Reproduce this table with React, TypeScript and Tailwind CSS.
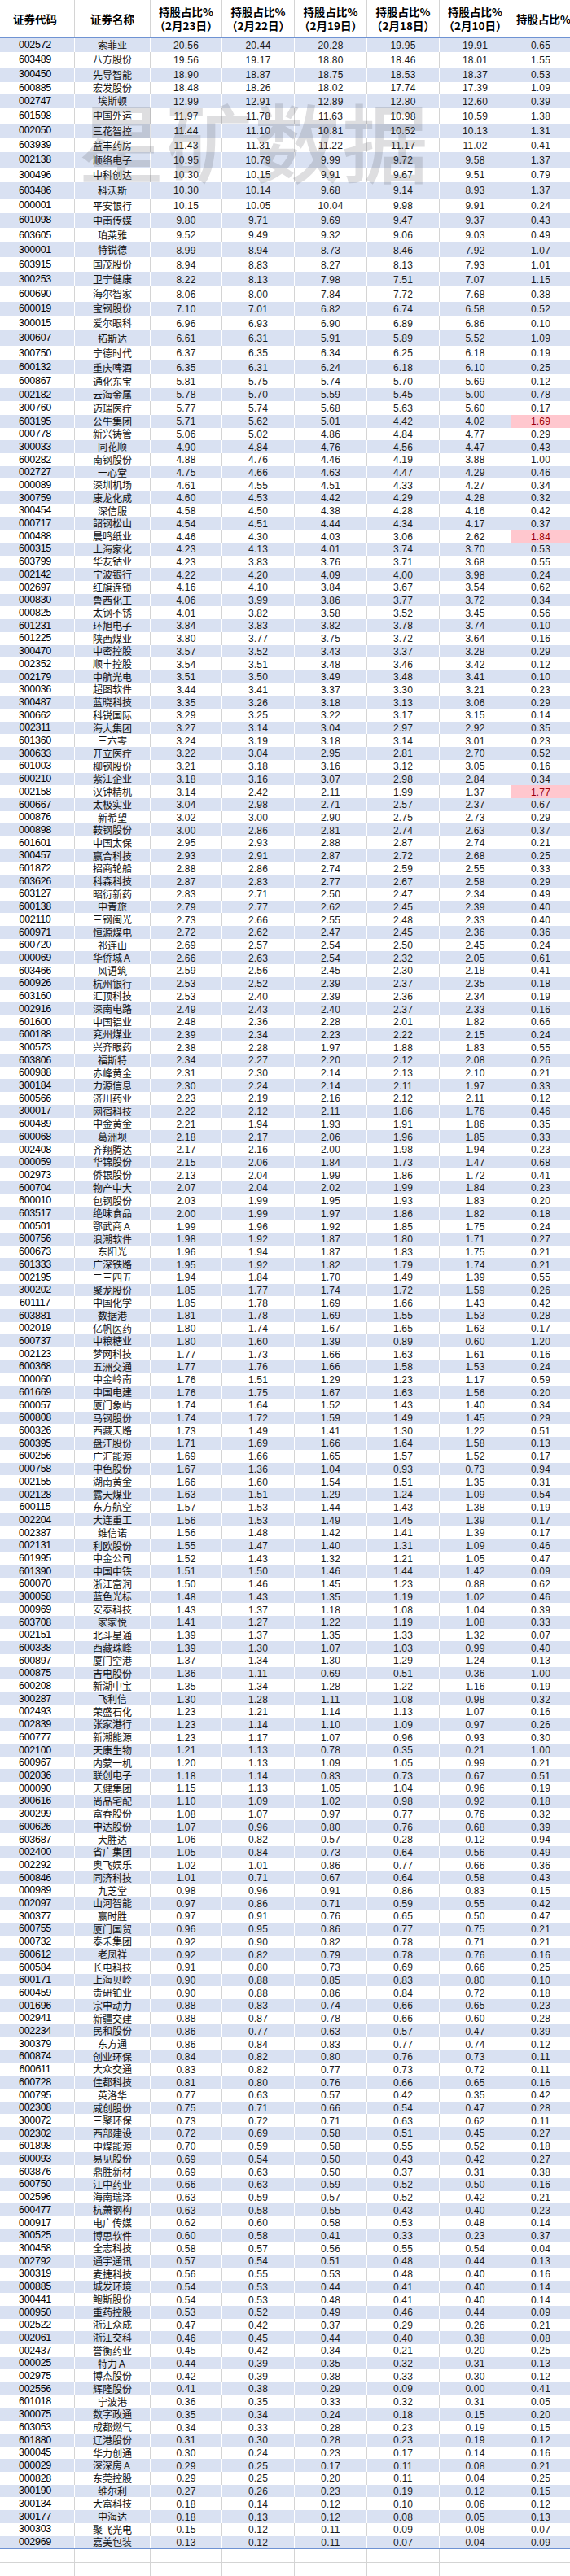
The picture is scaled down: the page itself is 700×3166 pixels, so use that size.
const RAW = `002572 索菲亚 20.56 20.44 20.28 19.95 19.91 0.65
603489 八方股份 19.56 19.17 18.80 18.46 18.01 1.55
300450 先导智能 18.90 18.87 18.75 18.53 18.37 0.53
600885 宏发股份 18.48 18.26 18.02 17.74 17.39 1.09
002747 埃斯顿 12.99 12.91 12.89 12.80 12.60 0.39
601598 中国外运 11.97 11.78 11.63 10.98 10.59 1.38
002050 三花智控 11.44 11.10 10.81 10.52 10.13 1.31
603939 益丰药房 11.43 11.31 11.22 11.17 11.02 0.41
002138 顺络电子 10.95 10.79 9.99 9.72 9.58 1.37
300496 中科创达 10.30 10.15 9.91 9.67 9.51 0.79
603486 科沃斯 10.30 10.14 9.68 9.14 8.93 1.37
000001 平安银行 10.15 10.05 10.04 9.98 9.91 0.24
601098 中南传媒 9.80 9.71 9.69 9.47 9.37 0.43
603605 珀莱雅 9.52 9.49 9.32 9.06 9.03 0.49
300001 特锐德 8.99 8.94 8.73 8.46 7.92 1.07
603915 国茂股份 8.94 8.83 8.27 8.13 7.93 1.01
300253 卫宁健康 8.22 8.13 7.98 7.51 7.07 1.15
600690 海尔智家 8.06 8.00 7.84 7.72 7.68 0.38
600019 宝钢股份 7.10 7.01 6.82 6.74 6.58 0.52
300015 爱尔眼科 6.96 6.93 6.90 6.89 6.86 0.10
300607 拓斯达 6.61 6.31 5.91 5.89 5.52 1.09
300750 宁德时代 6.37 6.35 6.34 6.25 6.18 0.19
600132 重庆啤酒 6.35 6.31 6.24 6.18 6.10 0.25
600867 通化东宝 5.81 5.75 5.74 5.70 5.69 0.12
002182 云海金属 5.78 5.70 5.59 5.45 5.00 0.78
300760 迈瑞医疗 5.77 5.74 5.68 5.63 5.60 0.17
603195 公牛集团 5.71 5.62 5.01 4.42 4.02 1.69*
000778 新兴铸管 5.06 5.02 4.86 4.84 4.77 0.29
300033 同花顺 4.90 4.84 4.76 4.56 4.47 0.43
600282 南钢股份 4.88 4.76 4.46 4.19 3.88 1.00
002727 一心堂 4.75 4.66 4.63 4.47 4.29 0.46
000089 深圳机场 4.61 4.55 4.51 4.33 4.27 0.34
300759 康龙化成 4.60 4.53 4.42 4.29 4.28 0.32
300454 深信服 4.58 4.50 4.38 4.28 4.16 0.42
000717 韶钢松山 4.54 4.51 4.44 4.34 4.17 0.37
000488 晨鸣纸业 4.46 4.30 4.03 3.06 2.62 1.84*
600315 上海家化 4.23 4.13 4.01 3.74 3.70 0.53
603799 华友钴业 4.23 3.83 3.76 3.71 3.68 0.55
002142 宁波银行 4.22 4.20 4.09 4.00 3.98 0.24
002697 红旗连锁 4.16 4.10 3.84 3.67 3.54 0.62
000830 鲁西化工 4.06 3.99 3.86 3.77 3.72 0.34
000825 太钢不锈 4.01 3.82 3.58 3.52 3.45 0.56
601231 环旭电子 3.84 3.83 3.82 3.78 3.74 0.10
601225 陕西煤业 3.80 3.77 3.75 3.72 3.64 0.16
300470 中密控股 3.57 3.52 3.43 3.37 3.28 0.29
002352 顺丰控股 3.54 3.51 3.48 3.46 3.42 0.12
002179 中航光电 3.51 3.50 3.49 3.48 3.41 0.10
300036 超图软件 3.44 3.41 3.37 3.30 3.21 0.23
300487 蓝晓科技 3.35 3.26 3.18 3.13 3.06 0.29
300662 科锐国际 3.29 3.25 3.22 3.17 3.15 0.14
002311 海大集团 3.27 3.14 3.04 2.97 2.92 0.35
601360 三六零 3.24 3.19 3.18 3.14 3.01 0.23
300633 开立医疗 3.22 3.04 2.95 2.81 2.70 0.52
601003 柳钢股份 3.21 3.18 3.16 3.12 3.05 0.16
600210 紫江企业 3.18 3.16 3.07 2.98 2.84 0.34
002158 汉钟精机 3.14 2.42 2.11 1.99 1.37 1.77*
600667 太极实业 3.04 2.98 2.71 2.57 2.37 0.67
000876 新希望 3.02 3.00 2.90 2.75 2.73 0.29
000898 鞍钢股份 3.00 2.86 2.81 2.74 2.63 0.37
601601 中国太保 2.95 2.93 2.88 2.87 2.74 0.21
300457 赢合科技 2.93 2.91 2.87 2.72 2.68 0.25
601872 招商轮船 2.88 2.86 2.74 2.59 2.55 0.33
603626 科森科技 2.87 2.83 2.77 2.67 2.58 0.29
603127 昭衍新药 2.83 2.71 2.50 2.47 2.34 0.49
600138 中青旅 2.79 2.77 2.62 2.45 2.39 0.40
002110 三钢闽光 2.73 2.66 2.55 2.48 2.33 0.40
600971 恒源煤电 2.72 2.62 2.47 2.45 2.36 0.36
600720 祁连山 2.69 2.57 2.54 2.50 2.45 0.24
000069 华侨城Ａ 2.66 2.63 2.54 2.32 2.05 0.61
603466 风语筑 2.59 2.56 2.45 2.30 2.18 0.41
600926 杭州银行 2.53 2.52 2.39 2.37 2.35 0.18
603160 汇顶科技 2.53 2.40 2.39 2.36 2.34 0.19
002916 深南电路 2.49 2.43 2.40 2.37 2.33 0.16
601600 中国铝业 2.48 2.36 2.28 2.01 1.82 0.66
600188 兖州煤业 2.39 2.34 2.23 2.22 2.15 0.24
300573 兴齐眼药 2.38 2.28 1.97 1.88 1.83 0.55
603806 福斯特 2.34 2.27 2.20 2.12 2.08 0.26
600988 赤峰黄金 2.31 2.30 2.14 2.13 2.10 0.21
300184 力源信息 2.30 2.24 2.14 2.11 1.97 0.33
600566 济川药业 2.23 2.19 2.16 2.12 2.11 0.12
300017 网宿科技 2.22 2.12 2.11 1.86 1.76 0.46
600489 中金黄金 2.21 1.94 1.93 1.91 1.86 0.35
600068 葛洲坝 2.18 2.17 2.06 1.96 1.85 0.33
002408 齐翔腾达 2.17 2.16 2.00 1.98 1.94 0.23
000059 华锦股份 2.15 2.06 1.84 1.73 1.47 0.68
002973 侨银股份 2.13 2.04 1.99 1.86 1.72 0.41
600704 物产中大 2.07 2.04 2.02 1.99 1.84 0.23
600010 包钢股份 2.03 1.99 1.95 1.93 1.83 0.20
603517 绝味食品 2.00 1.99 1.97 1.86 1.82 0.18
000501 鄂武商Ａ 1.99 1.96 1.92 1.85 1.75 0.24
600756 浪潮软件 1.98 1.92 1.87 1.80 1.71 0.27
600673 东阳光 1.96 1.94 1.87 1.83 1.75 0.21
601333 广深铁路 1.95 1.92 1.82 1.79 1.74 0.21
002195 二三四五 1.94 1.84 1.70 1.49 1.39 0.55
300202 聚龙股份 1.85 1.77 1.74 1.72 1.59 0.26
601117 中国化学 1.85 1.78 1.69 1.66 1.43 0.42
603881 数据港 1.81 1.78 1.69 1.55 1.53 0.28
002019 亿帆医药 1.80 1.74 1.67 1.65 1.63 0.17
600737 中粮糖业 1.80 1.60 1.39 0.89 0.60 1.20
002123 梦网科技 1.77 1.73 1.66 1.63 1.61 0.16
600368 五洲交通 1.77 1.76 1.66 1.58 1.53 0.24
000060 中金岭南 1.76 1.51 1.29 1.23 1.17 0.59
601669 中国电建 1.76 1.75 1.67 1.63 1.56 0.20
600057 厦门象屿 1.74 1.64 1.52 1.43 1.40 0.34
600808 马钢股份 1.74 1.72 1.59 1.49 1.45 0.29
600326 西藏天路 1.73 1.49 1.41 1.30 1.22 0.51
600395 盘江股份 1.71 1.69 1.66 1.64 1.58 0.13
600256 广汇能源 1.69 1.66 1.65 1.57 1.52 0.17
000758 中色股份 1.67 1.36 1.04 0.93 0.73 0.94
002155 湖南黄金 1.66 1.60 1.54 1.51 1.35 0.31
002128 露天煤业 1.63 1.51 1.29 1.24 1.09 0.54
600115 东方航空 1.57 1.53 1.44 1.43 1.38 0.19
002204 大连重工 1.56 1.53 1.49 1.45 1.39 0.17
002387 维信诺 1.56 1.48 1.42 1.41 1.39 0.17
002131 利欧股份 1.55 1.47 1.40 1.31 1.09 0.46
601995 中金公司 1.52 1.43 1.32 1.21 1.05 0.47
601390 中国中铁 1.51 1.50 1.46 1.44 1.42 0.09
600070 浙江富润 1.50 1.46 1.45 1.23 0.88 0.62
300058 蓝色光标 1.48 1.43 1.35 1.19 1.02 0.46
000969 安泰科技 1.43 1.37 1.18 1.08 1.04 0.39
603708 家家悦 1.41 1.27 1.22 1.19 1.08 0.33
002151 北斗星通 1.39 1.37 1.35 1.33 1.32 0.07
600338 西藏珠峰 1.39 1.30 1.07 1.03 0.99 0.40
600897 厦门空港 1.37 1.34 1.30 1.29 1.24 0.13
000875 吉电股份 1.36 1.11 0.69 0.51 0.36 1.00
600208 新湖中宝 1.35 1.34 1.28 1.22 1.16 0.19
300287 飞利信 1.30 1.28 1.11 1.08 0.98 0.32
002493 荣盛石化 1.23 1.21 1.14 1.13 1.07 0.16
002839 张家港行 1.23 1.14 1.10 1.09 0.97 0.26
600777 新潮能源 1.23 1.17 1.07 0.96 0.93 0.30
002100 天康生物 1.21 1.13 0.78 0.35 0.21 1.00
600967 内蒙一机 1.20 1.13 1.09 1.05 0.99 0.21
002036 联创电子 1.18 1.14 0.83 0.73 0.67 0.51
000090 天健集团 1.15 1.13 1.05 1.04 0.96 0.19
300616 尚品宅配 1.10 1.09 1.02 0.98 0.92 0.18
300299 富春股份 1.08 1.07 0.97 0.77 0.76 0.32
600626 申达股份 1.07 0.96 0.80 0.76 0.68 0.39
603687 大胜达 1.06 0.82 0.57 0.28 0.12 0.94
002400 省广集团 1.05 0.84 0.73 0.64 0.56 0.49
002292 奥飞娱乐 1.02 1.01 0.86 0.77 0.66 0.36
600846 同济科技 1.01 0.71 0.67 0.64 0.58 0.43
000989 九芝堂 0.98 0.96 0.91 0.86 0.83 0.15
002097 山河智能 0.97 0.86 0.71 0.59 0.55 0.42
300377 赢时胜 0.97 0.91 0.76 0.65 0.50 0.47
600755 厦门国贸 0.96 0.95 0.86 0.77 0.75 0.21
000732 泰禾集团 0.92 0.90 0.82 0.78 0.71 0.21
600612 老凤祥 0.92 0.82 0.79 0.78 0.76 0.16
600584 长电科技 0.91 0.80 0.73 0.69 0.66 0.25
600171 上海贝岭 0.90 0.88 0.85 0.83 0.80 0.10
600459 贵研铂业 0.90 0.88 0.86 0.84 0.72 0.18
001696 宗申动力 0.88 0.83 0.74 0.66 0.65 0.23
002941 新疆交建 0.88 0.87 0.78 0.66 0.60 0.28
002234 民和股份 0.86 0.77 0.63 0.57 0.47 0.39
300379 东方通 0.86 0.84 0.83 0.77 0.74 0.12
600874 创业环保 0.84 0.82 0.80 0.76 0.73 0.11
600611 大众交通 0.83 0.82 0.77 0.73 0.72 0.11
600728 佳都科技 0.81 0.80 0.76 0.66 0.65 0.16
000795 英洛华 0.77 0.63 0.57 0.42 0.35 0.42
002308 威创股份 0.75 0.71 0.66 0.54 0.47 0.28
300072 三聚环保 0.73 0.72 0.71 0.63 0.62 0.11
002302 西部建设 0.72 0.69 0.58 0.51 0.45 0.27
601898 中煤能源 0.70 0.59 0.58 0.55 0.52 0.18
600093 易见股份 0.69 0.54 0.50 0.43 0.42 0.27
603876 鼎胜新材 0.69 0.63 0.50 0.37 0.31 0.38
600750 江中药业 0.66 0.63 0.59 0.52 0.50 0.16
002596 海南瑞泽 0.63 0.59 0.57 0.52 0.42 0.21
600477 杭萧钢构 0.63 0.58 0.55 0.43 0.40 0.23
000917 电广传媒 0.62 0.60 0.58 0.53 0.48 0.14
300525 博思软件 0.60 0.58 0.41 0.33 0.23 0.37
300458 全志科技 0.58 0.57 0.56 0.55 0.54 0.04
002792 通宇通讯 0.57 0.54 0.51 0.48 0.44 0.13
300319 麦捷科技 0.56 0.55 0.53 0.48 0.40 0.16
000885 城发环境 0.54 0.53 0.44 0.41 0.40 0.14
300441 鲍斯股份 0.54 0.53 0.48 0.41 0.40 0.14
000950 重药控股 0.53 0.52 0.49 0.46 0.44 0.09
002522 浙江众成 0.47 0.42 0.37 0.29 0.26 0.21
002061 浙江交科 0.46 0.45 0.44 0.40 0.38 0.08
002437 誉衡药业 0.45 0.42 0.34 0.21 0.20 0.25
000025 特力Ａ 0.44 0.39 0.35 0.32 0.31 0.13
002975 博杰股份 0.42 0.39 0.38 0.33 0.30 0.12
002556 辉隆股份 0.41 0.38 0.29 0.09 0.00 0.41
601018 宁波港 0.36 0.35 0.33 0.32 0.31 0.05
300075 数字政通 0.35 0.34 0.24 0.18 0.15 0.20
603053 成都燃气 0.34 0.33 0.28 0.23 0.19 0.15
601880 辽港股份 0.31 0.30 0.28 0.23 0.19 0.12
300045 华力创通 0.30 0.24 0.23 0.17 0.14 0.16
000029 深深房Ａ 0.29 0.25 0.17 0.11 0.08 0.21
000828 东莞控股 0.29 0.25 0.20 0.11 0.04 0.25
300190 维尔利 0.27 0.26 0.23 0.19 0.12 0.15
300134 大富科技 0.18 0.14 0.12 0.10 0.06 0.12
300177 中海达 0.18 0.13 0.12 0.08 0.05 0.13
300303 聚飞光电 0.15 0.12 0.11 0.09 0.08 0.07
002969 嘉美包装 0.13 0.12 0.11 0.07 0.04 0.09`

// the screenshot's first rows are taller than the rest
const TOP_HEIGHTS = [
  17.3, 18.7, 18, 14.3, 18.3, 18.3, 18.3, 17.3, 18.7, 18, 20, 17.7, 18.3, 18.3,
  18.3, 17.7, 18, 18.7, 17.3, 18.3, 18.3, 18.3, 17.3, 16.7, 16, 17.3, 15.3,
]

const rows = RAW.split("\n").map((line) => {
  const [code, name, ...vals] = line.trim().split(/\s+/)
  const last = vals[5]
  const hot = last.endsWith("*")
  return { code, name, vals: [...vals.slice(0, 5), last.replace("*", "")], hot }
})

const dates = ["2月23日", "2月22日", "2月19日", "2月18日", "2月10日"]

const GRID = "grid grid-cols-[92px_93px_88px_89px_89px_89px_88px_72px]"
const NUM = "font-['Liberation_Sans',sans-serif] text-[12px] tracking-[0.2px] text-[#1a1a1a]"
const CJK = "font-['Noto_Sans_CJK_SC',sans-serif]"

function DataRow({ r, i }: { r: (typeof rows)[number]; i: number }) {
  const blue = i % 2 === 0
  const line = blue ? "border-r border-white" : "border-r border-[#d4d4d4]"
  const h = i < TOP_HEIGHTS.length ? TOP_HEIGHTS[i] : 15.706
  return (
    <div className={`${GRID} ${blue ? "bg-[#d9e1f2]" : "bg-white"}`} style={{ height: h }}>
      <div className={`${line} flex items-center justify-center pr-[5px] font-['Liberation_Sans',sans-serif] text-[12.5px] tracking-[-0.3px] leading-none text-black`}>
        {r.code}
      </div>
      <div className={`${line} ${CJK} flex items-center justify-center text-[12px] leading-none text-[#111]`}>
        {r.name}
      </div>
      {r.vals.map((v, k) => {
        const isLast = k === 5
        const pink = isLast && r.hot
        return (
          <div
            key={k}
            className={`${isLast ? "" : line} ${NUM} flex items-center justify-center pt-[1px] leading-none ${
              pink ? "bg-[#ffc7ce] text-[#9c0006]" : ""
            }`}
          >
            {v}
          </div>
        )
      })}
    </div>
  )
}

export default function App() {
  return (
    <div className="relative w-[700px] overflow-hidden bg-white">
      {/* Header */}
      <div className={`${GRID} h-[46.7px] border-b-[1.5px] border-[#6f93d3] ${CJK} font-bold text-black text-[13.5px]`}>
        <div className="flex items-center justify-center pr-[5px] border-r border-[#d4d4d4]">证券代码</div>
        <div className="flex items-center justify-center border-r border-[#d4d4d4]">证券名称</div>
        {dates.map((d) => (
          <div key={d} className="flex flex-col items-center justify-center leading-[17px] border-r border-[#d4d4d4]">
            <span>持股占比%</span>
            <span>（{d}）</span>
          </div>
        ))}
        <div className="flex items-center pl-[6px] whitespace-nowrap overflow-hidden">持股占比%</div>
      </div>

      {/* Body */}
      <div>
        {rows.map((r, i) => (
          <DataRow key={r.code} r={r} i={i} />
        ))}
      </div>

      {/* empty sheet rows below the table */}
      <div className="border-t-[1.5px] border-[#6f93d3]">
        {[17, 17].map((h, i) => (
          <div key={i} className={`${GRID} border-b border-[#d4d4d4]`} style={{ height: h }}>
            {Array.from({ length: 8 }).map((_, k) => (
              <div key={k} className={k < 7 ? "border-r border-[#d4d4d4]" : ""} />
            ))}
          </div>
        ))}
      </div>

      {/* Watermark */}
      <div className={`pointer-events-none absolute left-[96px] top-[118px] ${CJK} font-medium text-[106px] leading-none tracking-[2px] whitespace-nowrap text-[rgba(90,90,100,0.2)]`}>
        星矿数据
      </div>
    </div>
  )
}
